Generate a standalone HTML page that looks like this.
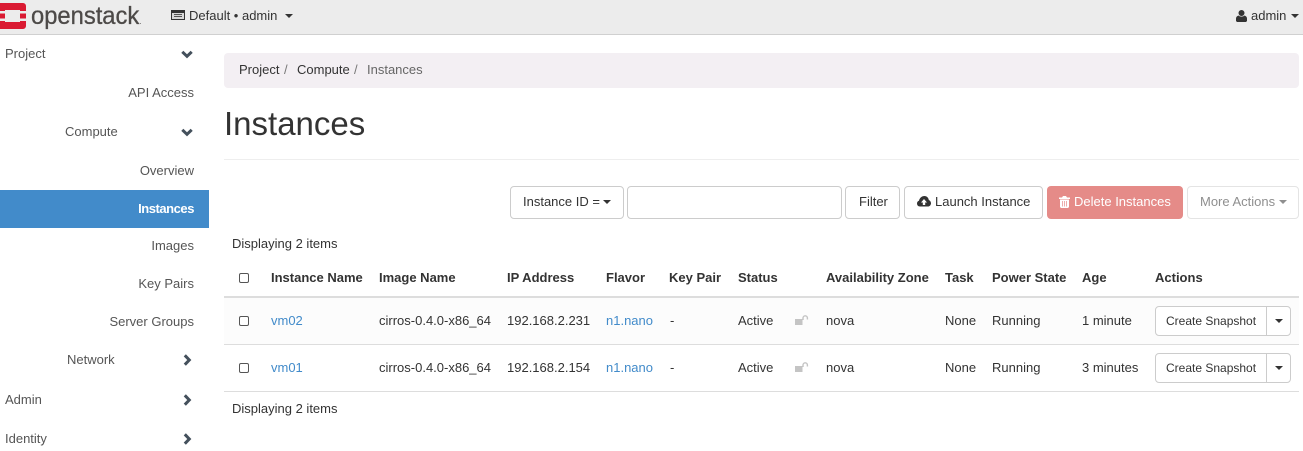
<!DOCTYPE html>
<html><head><meta charset="utf-8"><title>Instances</title>
<style>
html,body{margin:0;padding:0;background:#fff}
body{position:relative;width:1303px;height:451px;overflow:hidden;font:13px/20px "Liberation Sans",Arial,sans-serif;color:#333}
.t{position:absolute;white-space:nowrap;line-height:20px;margin-top:1px}
.b{font-weight:bold;color:#333}
.l{color:#428bca}
.s{color:#555}
.box{position:absolute;box-sizing:border-box;border:1px solid #ccc;border-radius:4px;background:#fff}
.cb{position:absolute;box-sizing:border-box;width:10px;height:10px;border:1px solid #555;border-radius:2px;background:#fff}
.hr{position:absolute;left:224px;width:1075px;height:1px;background:#ddd}
svg{position:absolute;overflow:visible}
.car{position:absolute;width:0;height:0;border-left:4px solid transparent;border-right:4px solid transparent;border-top:4px solid #333}
</style></head><body>
<div style="position:absolute;left:0;top:0;width:1303px;height:34px;background:#ececec;border-bottom:1px solid #d0d0d0"></div>
<svg style="left:0;top:3px" width="26" height="26" viewBox="0 0 26 26"><path fill="#da1a32" d="M0 0H23a3 3 0 0 1 3 3V8H20V7H5V8H0ZM0 18H5V19H20V18H26V23a3 3 0 0 1-3 3H0ZM0 10.500H5V15.500H0ZM20 10.500H26V15.500H20Z"/></svg>
<div class="t" style="left:31px;top:2px;font-size:25px;line-height:26px;color:#4d4a48;transform:scaleX(.95);transform-origin:0 0;-webkit-text-stroke:.3px #4d4a48">openstack<span style="font-size:8px;-webkit-text-stroke:0">.</span></div>
<svg style="left:171px;top:10px" width="14" height="10" viewBox="0 0 14 10"><rect x=".5" y=".5" width="13" height="9" fill="#d8d8d8" stroke="#333"/><rect x="1" y="1" width="12" height="2" fill="#333"/><path d="M3 4.500H11M3 6.500H11" stroke="#555"/></svg>
<div class="t" style="left:189px;top:5px">Default • admin</div>
<div class="car" style="left:285px;top:14px"></div>
<svg style="left:1236px;top:10px" width="11" height="12" viewBox="0 0 11 12"><circle cx="5.500" cy="3" r="3" fill="#333"/><path fill="#333" d="M0 11V8.500C0 7 1 6 2.500 5.500C4 7 7 7 8.500 5.500C10 6 11 7 11 8.500V11L10 12H1Z"/></svg>
<div class="t" style="left:1251px;top:5px">admin</div>
<div class="car" style="left:1291px;top:14px"></div>

<div class="t s" style="left:5px;top:43px">Project</div>
<div class="t s" style="right:1109px;top:82px">API Access</div>
<div class="t s" style="left:65px;top:121px">Compute</div>
<div class="t s" style="right:1109px;top:160px">Overview</div>
<div style="position:absolute;left:0;top:190px;width:209px;height:38px;background:#428bca"></div>
<div class="t" style="right:1109px;top:198px;color:#fff;font-weight:bold;letter-spacing:-.45px">Instances</div>
<div class="t s" style="right:1109px;top:235px">Images</div>
<div class="t s" style="right:1109px;top:273px">Key Pairs</div>
<div class="t s" style="right:1109px;top:311px">Server Groups</div>
<div class="t s" style="left:67px;top:349px">Network</div>
<div class="t s" style="left:5px;top:389px">Admin</div>
<div class="t s" style="left:5px;top:428px">Identity</div>
<svg style="left:181px;top:50px" width="12" height="9" viewBox="0 0 12 9"><path d="M1.300 1.800L6 6.300L10.700 1.800" fill="none" stroke="#44505c" stroke-width="3"/></svg>
<svg style="left:181px;top:128px" width="12" height="9" viewBox="0 0 12 9"><path d="M1.300 1.800L6 6.300L10.700 1.800" fill="none" stroke="#44505c" stroke-width="3"/></svg>
<svg style="left:183px;top:354px" width="9" height="12" viewBox="0 0 9 12"><path d="M1.800 1.300L6.300 6L1.800 10.700" fill="none" stroke="#44505c" stroke-width="3"/></svg>
<svg style="left:183px;top:394px" width="9" height="12" viewBox="0 0 9 12"><path d="M1.800 1.300L6.300 6L1.800 10.700" fill="none" stroke="#44505c" stroke-width="3"/></svg>
<svg style="left:183px;top:433px" width="9" height="12" viewBox="0 0 9 12"><path d="M1.800 1.300L6.300 6L1.800 10.700" fill="none" stroke="#44505c" stroke-width="3"/></svg>

<div style="position:absolute;left:224px;top:53px;width:1075px;height:35px;background:#f3eff3;border-radius:4px"></div>
<div class="t" style="left:239px;top:59px">Project</div><div class="t" style="left:284px;top:59px;color:#777">/</div>
<div class="t" style="left:297px;top:59px">Compute</div><div class="t" style="left:354px;top:59px;color:#777">/</div>
<div class="t" style="left:367px;top:59px;color:#666">Instances</div>
<div class="t" style="left:224px;top:103px;font-size:33px;line-height:40px;color:#333">Instances</div>
<div class="hr" style="top:159px;background:#eee"></div>

<div class="box" style="left:510px;top:186px;width:114px;height:33px"></div>
<div class="t" style="left:523px;top:191px">Instance ID =</div>
<div class="car" style="left:603px;top:200px"></div>
<div class="box" style="left:627px;top:186px;width:215px;height:33px"></div>
<div class="box" style="left:845px;top:186px;width:55px;height:33px"></div>
<div class="t" style="left:859px;top:191px">Filter</div>
<div class="box" style="left:904px;top:186px;width:139px;height:33px"></div>
<svg style="left:917px;top:196px" width="14" height="11" viewBox="0 0 14 11"><path fill="#333" d="M3 10.500C1 10.500 0 9 0 7.500C0 6 1 5 2 4.800C2.300 2.500 4.500 0 7.500 0C10 0 11.500 2 11.800 4C13 4.500 14 5.800 14 7.200C14 9 12.500 10.500 11 10.500Z"/><path fill="#fff" d="M7 3L10 6.500H8.200V9H5.800V6.500H4Z"/></svg>
<div class="t" style="left:935px;top:191px">Launch Instance</div>
<div style="position:absolute;left:1047px;top:186px;width:136px;height:33px;background:#e58b88;border-radius:4px"></div>
<svg style="left:1059px;top:196px" width="11" height="12" viewBox="0 0 11 12"><path fill="#fff" d="M4 0H7L8 1.500H11V3H0V1.500H3ZM1 3.500H10V11L9 12H2L1 11Z"/><path stroke="#e58b88" stroke-width=".7" d="M3.500 5V10.500M5.500 5V10.500M7.500 5V10.500"/></svg>
<div class="t" style="left:1074px;top:191px;color:#fff">Delete Instances</div>
<div class="box" style="left:1187px;top:186px;width:112px;height:33px;border-color:#e4e4e4"></div>
<div class="t" style="left:1200px;top:191px;color:#8f8f8f">More Actions</div>
<div class="car" style="left:1279px;top:200px;border-top-color:#8f8f8f"></div>

<div class="t" style="left:232px;top:233px">Displaying 2 items</div>
<div class="cb" style="left:239px;top:273px"></div>
<div class="t b" style="left:271px;top:267px">Instance Name</div>
<div class="t b" style="left:379px;top:267px">Image Name</div>
<div class="t b" style="left:507px;top:267px">IP Address</div>
<div class="t b" style="left:606px;top:267px">Flavor</div>
<div class="t b" style="left:669px;top:267px">Key Pair</div>
<div class="t b" style="left:738px;top:267px">Status</div>
<div class="t b" style="left:826px;top:267px">Availability Zone</div>
<div class="t b" style="left:945px;top:267px">Task</div>
<div class="t b" style="left:992px;top:267px">Power State</div>
<div class="t b" style="left:1082px;top:267px">Age</div>
<div class="t b" style="left:1155px;top:267px">Actions</div>
<div class="hr" style="top:296px;height:2px"></div>
<div style="position:absolute;left:224px;top:298px;width:1075px;height:46px;background:#fcfcfc"></div>
<div class="hr" style="top:344px"></div>
<div class="hr" style="top:391px"></div>

<div class="cb" style="left:239px;top:316px"></div>
<div class="t l" style="left:271px;top:310px">vm02</div>
<div class="t" style="left:379px;top:310px">cirros-0.4.0-x86_64</div>
<div class="t" style="left:507px;top:310px">192.168.2.231</div>
<div class="t l" style="left:606px;top:310px">n1.nano</div>
<div class="t" style="left:670px;top:310px">-</div>
<div class="t" style="left:738px;top:310px">Active</div>
<svg style="left:795px;top:315px" width="13" height="10" viewBox="0 0 13 10"><rect x="0" y="4" width="7.500" height="6" fill="#c4c4c4"/><path d="M8 5V3A2.200 2.200 0 0 1 12.400 3V4.500" fill="none" stroke="#c4c4c4" stroke-width="1.400"/></svg>
<div class="t" style="left:826px;top:310px">nova</div>
<div class="t" style="left:945px;top:310px">None</div>
<div class="t" style="left:992px;top:310px">Running</div>
<div class="t" style="left:1082px;top:310px">1 minute</div>
<div class="box" style="left:1155px;top:306px;width:136px;height:30px"></div>
<div style="position:absolute;left:1266px;top:306px;width:1px;height:30px;background:#ccc"></div>
<div class="t" style="left:1166px;top:310px;font-size:12px">Create Snapshot</div>
<div class="car" style="left:1275px;top:319px"></div>

<div class="cb" style="left:239px;top:363px"></div>
<div class="t l" style="left:271px;top:357px">vm01</div>
<div class="t" style="left:379px;top:357px">cirros-0.4.0-x86_64</div>
<div class="t" style="left:507px;top:357px">192.168.2.154</div>
<div class="t l" style="left:606px;top:357px">n1.nano</div>
<div class="t" style="left:670px;top:357px">-</div>
<div class="t" style="left:738px;top:357px">Active</div>
<svg style="left:795px;top:362px" width="13" height="10" viewBox="0 0 13 10"><rect x="0" y="4" width="7.500" height="6" fill="#c4c4c4"/><path d="M8 5V3A2.200 2.200 0 0 1 12.400 3V4.500" fill="none" stroke="#c4c4c4" stroke-width="1.400"/></svg>
<div class="t" style="left:826px;top:357px">nova</div>
<div class="t" style="left:945px;top:357px">None</div>
<div class="t" style="left:992px;top:357px">Running</div>
<div class="t" style="left:1082px;top:357px">3 minutes</div>
<div class="box" style="left:1155px;top:353px;width:136px;height:30px"></div>
<div style="position:absolute;left:1266px;top:353px;width:1px;height:30px;background:#ccc"></div>
<div class="t" style="left:1166px;top:357px;font-size:12px">Create Snapshot</div>
<div class="car" style="left:1275px;top:366px"></div>

<div class="t" style="left:232px;top:398px">Displaying 2 items</div>
</body></html>
